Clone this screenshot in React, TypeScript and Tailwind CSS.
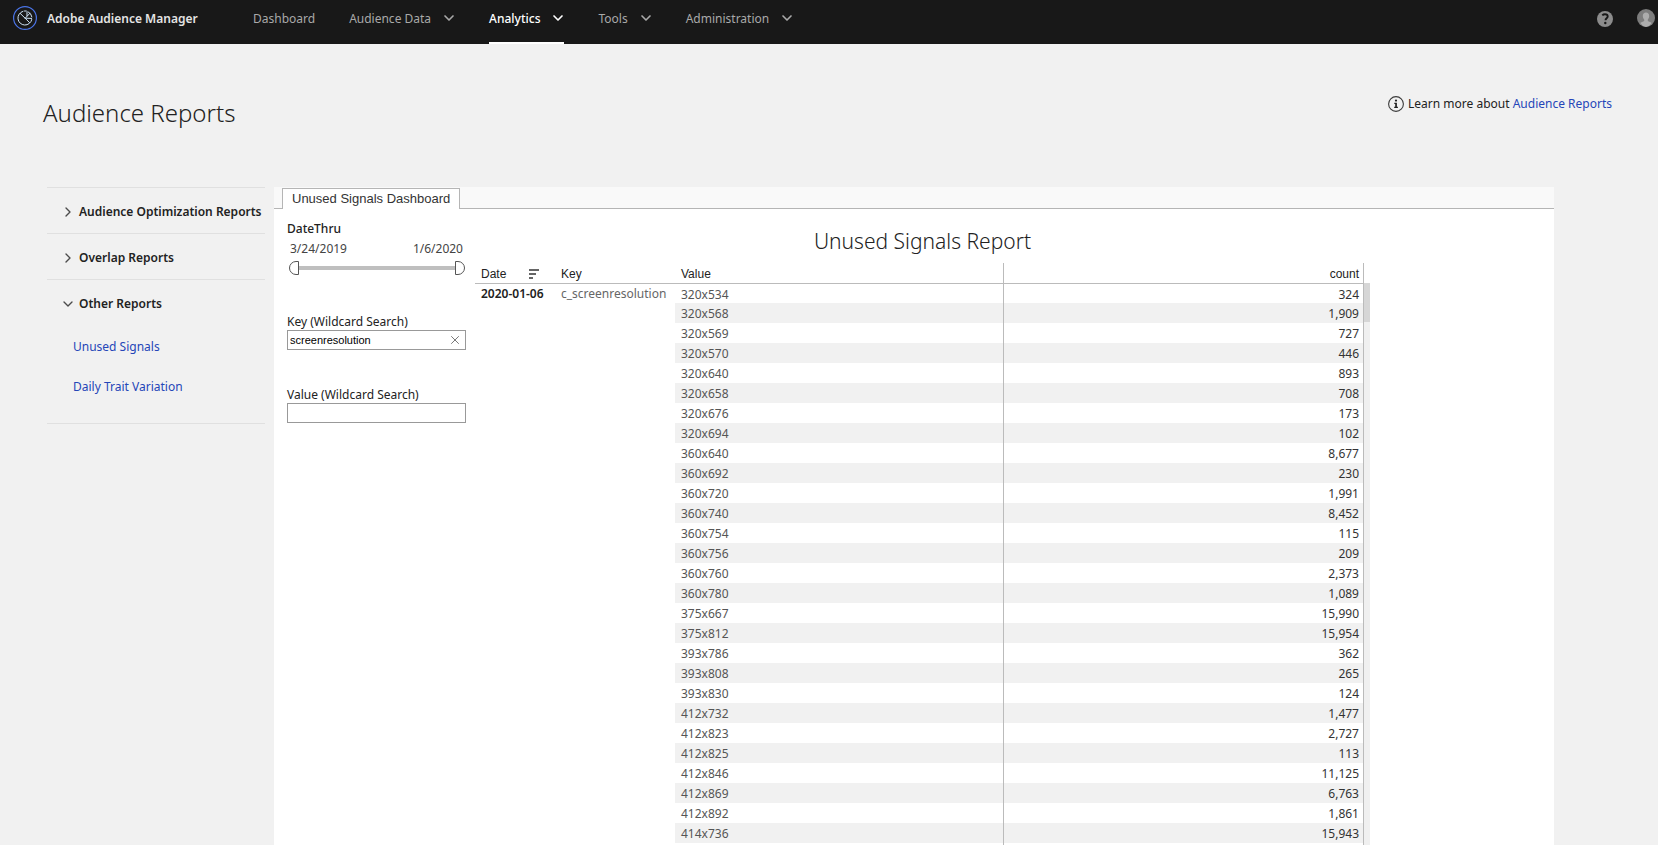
import { useState } from 'react'
import { ChevronDown, ChevronRight, X } from 'lucide-react'
import clsx from 'clsx'

interface Signal {
  value: string
  count: number
}

const navItems = [
  { label: 'Dashboard', menu: false },
  { label: 'Audience Data', menu: true },
  { label: 'Analytics', menu: true },
  { label: 'Tools', menu: true },
  { label: 'Administration', menu: true },
]

const reportGroups = [
  { label: 'Audience Optimization Reports', links: [] },
  { label: 'Overlap Reports', links: [] },
  { label: 'Other Reports', links: ['Unused Signals', 'Daily Trait Variation'] },
]

const signals: Signal[] = [
  { value: '320x534', count: 324 },
  { value: '320x568', count: 1909 },
  { value: '320x569', count: 727 },
  { value: '320x570', count: 446 },
  { value: '320x640', count: 893 },
  { value: '320x658', count: 708 },
  { value: '320x676', count: 173 },
  { value: '320x694', count: 102 },
  { value: '360x640', count: 8677 },
  { value: '360x692', count: 230 },
  { value: '360x720', count: 1991 },
  { value: '360x740', count: 8452 },
  { value: '360x754', count: 115 },
  { value: '360x756', count: 209 },
  { value: '360x760', count: 2373 },
  { value: '360x780', count: 1089 },
  { value: '375x667', count: 15990 },
  { value: '375x812', count: 15954 },
  { value: '393x786', count: 362 },
  { value: '393x808', count: 265 },
  { value: '393x830', count: 124 },
  { value: '412x732', count: 1477 },
  { value: '412x823', count: 2727 },
  { value: '412x825', count: 113 },
  { value: '412x846', count: 11125 },
  { value: '412x869', count: 6763 },
  { value: '412x892', count: 1861 },
  { value: '414x736', count: 15943 },
]

function Logo() {
  return (
    <svg className="size-6" viewBox="0 0 24 24" fill="none">
      <circle cx="12" cy="12" r="11.4" stroke="#4b75e8" strokeWidth="1.2" />
      <g stroke="#cfe3f5" strokeWidth="1" strokeLinecap="round">
        <path d="M10 5.3a7 7 0 1 0 8.8 8.2" />
        <path d="M11.5 5h1.8M15 5.7a7 7 0 0 1 3.9 5.2" />
        <path d="M7.3 7.5 16.5 16.5" />
        <path d="M12.2 12.2 17 7.2M13 12.2l5.6.2M14 6v3.8" />
      </g>
    </svg>
  )
}

function HelpIcon() {
  return (
    <svg className="size-4" viewBox="0 0 16 16">
      <circle cx="8" cy="8" r="8" fill="#8c8c8c" />
      <path
        d="M5.3 4.4C6 3.6 7 3.3 8 3.3c1.6 0 2.7.9 2.7 2.2 0 1.7-2.2 1.9-2.2 3.7"
        fill="none"
        stroke="#181818"
        strokeWidth="1.9"
      />
      <circle cx="8.3" cy="12" r="1.2" fill="#181818" />
    </svg>
  )
}

function Avatar() {
  return (
    <svg className="size-[18px]" viewBox="0 0 18 18">
      <circle cx="9" cy="9" r="9" fill="#7d7d7d" />
      <path
        d="M9 3.5c-2 0-3.2 1.4-3.2 3.4 0 1.5.6 2.7 1.4 3.5v1.5c-1.4.7-3 1.1-4 2.1A9 9 0 0 0 9 18a9 9 0 0 0 5.8-4c-1-1-2.6-1.4-4-2.1v-1.5c.8-.8 1.4-2 1.4-3.5 0-2-1.2-3.4-3.2-3.4z"
        fill="#adadad"
      />
    </svg>
  )
}

function InfoIcon() {
  return (
    <svg className="size-4" viewBox="0 0 16 16">
      <circle cx="8" cy="8" r="7.4" fill="none" stroke="#3b3b3b" strokeWidth="1.1" />
      <circle cx="8" cy="4.6" r="1.1" fill="#222" />
      <path d="M6.3 6.8h2.6v4h1v1.1H6.2v-1.1h1V7.9h-.9z" fill="#222" />
    </svg>
  )
}

function TopNav() {
  const [active, setActive] = useState('Analytics')

  return (
    <header className="flex h-11 shrink-0 items-start bg-[#181818] pl-[13px] pr-[3px]">
      <a href="#home" className="flex h-9 w-60 items-center gap-2.5 text-[12px] font-semibold text-[#e4e4e4]">
        <Logo />
        <span className="pt-px">Adobe Audience Manager</span>
      </a>
      <nav className="flex h-full gap-[34px] text-[12px]">
        {navItems.map(item => (
          <button
            key={item.label}
            onClick={() => setActive(item.label)}
            className={clsx(
              'flex items-start gap-2.5 border-b-2',
              active === item.label
                ? 'border-white font-medium text-white'
                : 'border-transparent text-[#a9a9a9]'
            )}
          >
            <span className="pt-px leading-9">{item.label}</span>
            {item.menu && <ChevronDown className="-mr-0.5 mt-2.5 size-4" strokeWidth={2.5} />}
          </button>
        ))}
      </nav>
      <div className="ml-auto flex gap-6">
        <button aria-label="Help" className="mt-[11px]">
          <HelpIcon />
        </button>
        <button aria-label="Account" className="mt-2">
          <Avatar />
        </button>
      </div>
    </header>
  )
}

function Sidebar() {
  const [open, setOpen] = useState('Other Reports')

  return (
    <aside className="w-[218px] shrink-0 self-start border-b border-[#e0e0e0] text-[12px]">
      {reportGroups.map(group => {
        const isOpen = open === group.label
        const Chevron = isOpen ? ChevronDown : ChevronRight
        return (
          <section key={group.label} className="border-t border-[#e0e0e0]">
            <button
              onClick={() => setOpen(isOpen ? '' : group.label)}
              className="flex h-[45px] w-full items-center gap-[3px] pl-[13px] pt-0.5 font-semibold text-[#222]"
            >
              <Chevron className="size-4 text-[#4b4b4b]" strokeWidth={2} />
              {group.label}
            </button>
            {isOpen && (
              <ul className="pb-4 pl-[26px] pt-0.5">
                {group.links.map(link => (
                  <li key={link} className="h-10 leading-10">
                    <a href="#report" className="text-[#2546b8]">
                      {link}
                    </a>
                  </li>
                ))}
              </ul>
            )}
          </section>
        )
      })}
    </aside>
  )
}

const rangeClass =
  'pointer-events-none absolute inset-0 h-[14px] w-full appearance-none bg-transparent [&::-webkit-slider-thumb]:pointer-events-auto [&::-webkit-slider-thumb]:h-[14px] [&::-webkit-slider-thumb]:w-[10px] [&::-webkit-slider-thumb]:appearance-none [&::-webkit-slider-thumb]:border [&::-webkit-slider-thumb]:border-[#555] [&::-webkit-slider-thumb]:bg-white'

function Filters() {
  const [from, setFrom] = useState(0)
  const [to, setTo] = useState(100)
  const [keySearch, setKeySearch] = useState('screenresolution')
  const [valueSearch, setValueSearch] = useState('')

  return (
    <div className="w-[201px] shrink-0 pl-[13px] pr-[9px] pt-3 text-[12px] leading-4 text-[#222]">
      <div className="font-medium">DateThru</div>
      <div className="mt-1 flex justify-between px-[3px] text-[#444]">
        <span>3/24/2019</span>
        <span>1/6/2020</span>
      </div>
      <div className="relative ml-0.5 mr-px mt-1 h-[14px]">
        <div className="mx-2 h-full border-y-[5px] border-white bg-[#bfbfbf]" />
        <input
          type="range"
          aria-label="Start date"
          value={from}
          onChange={e => setFrom(Math.min(+e.target.value, to))}
          className={clsx(rangeClass, '[&::-webkit-slider-thumb]:rounded-l-full')}
        />
        <input
          type="range"
          aria-label="End date"
          value={to}
          onChange={e => setTo(Math.max(+e.target.value, from))}
          className={clsx(rangeClass, '[&::-webkit-slider-thumb]:rounded-r-full')}
        />
      </div>

      <label htmlFor="key-search" className="mt-[39px] block">
        Key (Wildcard Search)
      </label>
      <div className="flex h-5 items-center border border-[#999] bg-white pr-[3px]">
        <input
          id="key-search"
          value={keySearch}
          onChange={e => setKeySearch(e.target.value)}
          className="w-full min-w-0 px-0.5 font-['Liberation_Sans',sans-serif] text-[11px] text-black outline-none"
        />
        <button aria-label="Clear key search" onClick={() => setKeySearch('')}>
          <X className="size-3.5 text-[#666]" strokeWidth={1.5} />
        </button>
      </div>

      <label htmlFor="value-search" className="mt-[37px] block">
        Value (Wildcard Search)
      </label>
      <input
        id="value-search"
        value={valueSearch}
        onChange={e => setValueSearch(e.target.value)}
        className="block h-5 w-full border border-[#999] bg-white px-0.5 font-['Liberation_Sans',sans-serif] text-[11px] text-black outline-none"
      />
    </div>
  )
}

function SignalsTable() {
  return (
    <table className="w-full table-fixed border-separate border-spacing-0 border-r border-[#bbb] text-left text-[12px] leading-4 text-[#555]">
      <thead className="font-['Liberation_Sans',sans-serif] text-[#222]">
        <tr className="h-5 [&>th]:p-0 [&>th]:pt-0.5 [&>th]:font-normal">
          <th className="w-20">
            <span className="flex items-center justify-between pl-1.5 pr-4">
              Date
              <svg className="h-2.5 w-[10px]" viewBox="0 0 10 10" fill="#666">
                <path d="M0 0h10v2H0zM0 4h7v2H0zM0 8h4v2H0z" />
              </svg>
            </span>
          </th>
          <th className="w-[120px]">
            <span className="pl-1.5">Key</span>
          </th>
          <th className="w-82">
            <span className="pl-1.5">Value</span>
          </th>
          <th className="border-l border-[#bbb] text-right">
            <span className="pr-1">count</span>
          </th>
        </tr>
      </thead>
      <tbody className="[&>tr:first-child>*]:border-t">
        {signals.map((signal, index) => (
          <tr key={signal.value} className="h-5">
            {index === 0 && (
              <>
                <th rowSpan={signals.length} className="border-[#bbb] py-0.5 pl-1.5 align-top font-semibold text-[#222]">
                  2020-01-06
                </th>
                <td rowSpan={signals.length} className="border-[#bbb] py-0.5 pl-1.5 align-top text-[#666]">
                  c_screenresolution
                </td>
              </>
            )}
            <td className={clsx('border-[#bbb] pb-0 pl-1.5 pt-0.5', index % 2 === 1 && 'bg-[#f1f1f1]')}>
              {signal.value}
            </td>
            <td
              className={clsx(
                'border-l border-[#bbb] pb-0 pr-1 pt-0.5 text-right text-[#333]',
                index % 2 === 1 && 'bg-[#f1f1f1]'
              )}
            >
              {signal.count.toLocaleString('en-US')}
            </td>
          </tr>
        ))}
        {/* Trailing blank row carries the column rule down */}
        <tr className="h-5">
          <td colSpan={3} />
          <td className="border-l border-[#bbb]" />
        </tr>
      </tbody>
    </table>
  )
}

export default function App() {
  return (
    <div className="flex h-screen flex-col overflow-hidden bg-[#f1f1f1] font-['Noto_Sans',sans-serif] text-[#222]">
      <TopNav />

      <div className="flex h-[143px] shrink-0 items-start justify-between pl-[43px] pr-[46px]">
        <h1 className="mt-12 text-[24px] font-light leading-[42px]">Audience Reports</h1>
        <p className="mt-[50px] flex items-center gap-1 text-[12px] leading-5">
          <InfoIcon />
          <span>
            Learn more about{' '}
            <a href="#learn" className="text-[#2546b8]">
              Audience Reports
            </a>
          </span>
        </p>
      </div>

      <div className="flex min-h-0 flex-1 pl-[47px] pr-[104px]">
        <Sidebar />
        <main className="ml-[9px] flex min-w-0 flex-1 flex-col bg-white">
          {/* Dashboard tabs */}
          <div className="flex h-[22px] shrink-0 bg-[#f9f9f9]">
            <div className="w-2 border-b border-[#b5b5b5]" />
            <button className="mt-px border-x border-t border-[#b5b5b5] bg-white px-[9px] font-['Liberation_Sans',sans-serif] text-[13px] text-[#333]">
              Unused Signals Dashboard
            </button>
            <div className="flex-1 border-b border-[#b5b5b5]" />
          </div>

          <div className="flex min-h-0 flex-1 pr-[184px]">
            <Filters />
            <div className="flex min-w-0 flex-1 flex-col">
              <h2 className="mb-1.5 mt-4 text-center text-[21px] font-light leading-8">Unused Signals Report</h2>
              <div className="flex min-h-0 flex-1">
                <div className="min-w-0 flex-1">
                  <SignalsTable />
                </div>
                {/* Scrollbar */}
                <div className="mt-5 w-1.5 bg-[#f0f0f0]">
                  <div className="h-[39px] bg-[#d6d6d6]" />
                </div>
              </div>
            </div>
          </div>
        </main>
      </div>
    </div>
  )
}
